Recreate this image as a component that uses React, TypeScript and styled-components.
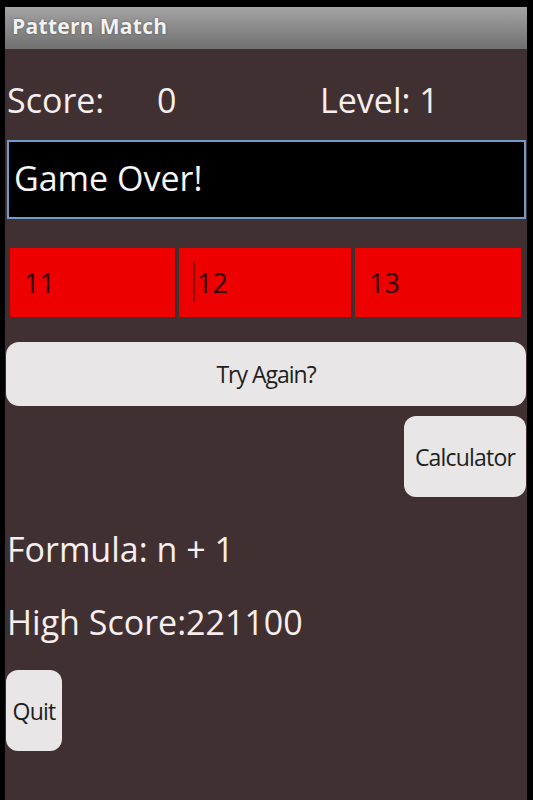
import React from "react";
import styled, { createGlobalStyle } from "styled-components";

const GlobalStyle = createGlobalStyle`
  html, body {
    margin: 0;
    padding: 0;
    background: #000;
  }
  body {
    font-family: "Open Sans", "Noto Sans", sans-serif;
  }
`;

const Frame = styled.div`
  background: #000;
  height: 800px;
  padding: 7px 6px 0 5px;
  box-sizing: border-box;
  width: 533px;
`;

const Screen = styled.div`
  background: #413031;
  display: flex;
  flex-direction: column;
  height: 793px;
`;

const TitleBar = styled.div`
  align-items: center;
  background: linear-gradient(#a4a4a4, #8c8c8c 45%, #707070);
  box-sizing: border-box;
  color: #f2f2f2;
  display: flex;
  font-size: 21px;
  font-weight: 700;
  height: 42px;
  letter-spacing: 0.3px;
  padding: 0 0 4px 7px;
  text-shadow: 0 0 2px rgba(0, 0, 0, 0.5);
`;

const Content = styled.div`
  display: flex;
  flex-direction: column;
`;

const ScoreRow = styled.div`
  color: #f7eef0;
  display: grid;
  font-size: 34px;
  grid-template-columns: 150px 163px auto;
  line-height: 46px;
  margin-top: 28px;
  padding-left: 2px;
`;

const MessageBox = styled.div`
  align-items: center;
  background: #000;
  border: 2px solid #6f9ccc;
  box-sizing: border-box;
  color: #f7f7f7;
  display: flex;
  font-size: 34px;
  height: 79px;
  margin: 17px 1px 0 2px;
  padding: 0 0 4px 5px;
`;

const CellRow = styled.div`
  display: grid;
  gap: 4px;
  grid-template-columns: 165px 172px 166px;
  margin: 29px 0 0 5px;
`;

const Cell = styled.div<{ $caret?: boolean }>`
  align-items: center;
  background: #ee0000;
  color: #2a0000;
  display: flex;
  font-size: 27px;
  height: 69px;
  padding-left: ${(p) => (p.$caret ? "18px" : "14px")};
  position: relative;

  &::before {
    background: rgba(60, 0, 0, 0.5);
    content: "";
    display: ${(p) => (p.$caret ? "block" : "none")};
    height: 40px;
    left: 14px;
    position: absolute;
    top: 14px;
    width: 2px;
  }
`;

const WideButton = styled.div`
  align-items: center;
  background: #e8e6e6;
  border-radius: 13px;
  color: #1e1e1e;
  display: flex;
  font-size: 23px;
  height: 64px;
  justify-content: center;
  letter-spacing: -1px;
  margin: 25px 1px 0 1px;
`;

const SideButton = styled.div<{ $side: "left" | "right"; $width: number }>`
  align-items: center;
  align-self: ${(p) => (p.$side === "right" ? "flex-end" : "flex-start")};
  background: #e8e6e6;
  border-radius: 12px;
  color: #1e1e1e;
  display: flex;
  font-size: 23px;
  height: 81px;
  justify-content: center;
  letter-spacing: -0.8px;
  margin: ${(p) => (p.$side === "right" ? "10px 1px 0 0" : "25px 0 0 1px")};
  width: ${(p) => p.$width}px;
`;

const InfoLine = styled.div<{ $top: number }>`
  color: #f7eef0;
  font-size: 34px;
  line-height: 46px;
  margin-top: ${(p) => p.$top}px;
  padding-left: 2px;
`;

function App(): JSX.Element {
  return (
    <>
      <GlobalStyle />
      <Frame>
        <Screen>
          <TitleBar>Pattern Match</TitleBar>
          <Content>
            <ScoreRow>
              <span>Score:</span>
              <span>0</span>
              <span>Level: 1</span>
            </ScoreRow>
            <MessageBox>Game Over!</MessageBox>
            <CellRow>
              <Cell>11</Cell>
              <Cell $caret>12</Cell>
              <Cell>13</Cell>
            </CellRow>
            <WideButton>Try Again?</WideButton>
            <SideButton $side="right" $width={122}>
              Calculator
            </SideButton>
            <InfoLine $top={29}>Formula: n + 1</InfoLine>
            <InfoLine $top={27}>High Score:221100</InfoLine>
            <SideButton $side="left" $width={56}>
              Quit
            </SideButton>
          </Content>
        </Screen>
      </Frame>
    </>
  );
}

export default App;
